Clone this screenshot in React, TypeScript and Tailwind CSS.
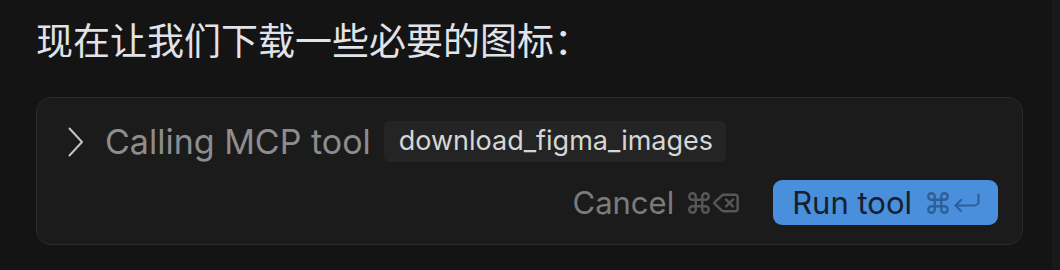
import { Command, Delete } from 'lucide-react'

const sans = "font-['Inter','Noto_Sans_CJK_SC',sans-serif]"

function ReturnKey() {
  return (
    <svg width="28" height="20" viewBox="0 0 28 20" fill="none" stroke="currentColor" strokeWidth="2.2" strokeLinecap="round" strokeLinejoin="round">
      <path d="M25.5 1.5v7a4 4 0 0 1-4 4H2.5" />
      <path d="M8 7 2.5 12.5 8 18" />
    </svg>
  )
}

export default function App() {
  return (
    <div className={`flex h-[270px] w-[1060px] bg-[#141414] ${sans}`}>
      <div className="flex-1 pl-[36px] pr-[29px] pt-[20px]">
        {/* Heading */}
        <p className="text-[37px] leading-[44px] text-[#e1e3e9]">现在让我们下载一些必要的图标：</p>

        {/* Tool call card */}
        <div className="mt-[33px] flex h-[148px] flex-col gap-[18px] rounded-[15px] border border-[#2b2b2b] bg-[#1b1b1b] pb-[19px] pl-[31px] pr-[24px] pt-[23px]">
          <div className="flex h-[41px] items-center">
            <svg width="16" height="30" viewBox="0 0 16 30" fill="none" className="shrink-0">
              <path d="M1.5 1.5 14 15 1.5 28.5" stroke="#bfc3cb" strokeWidth="2" strokeLinecap="round" strokeLinejoin="round" />
            </svg>
            <span className="ml-[21px] text-[34px] leading-none text-[#8d8d8d]">Calling MCP tool</span>
            <span className="ml-[13px] flex h-[41px] items-center rounded-[6px] bg-[#242424] pl-[15px] pr-[13px] text-[27px] text-[#d6d6d6]">
              download_figma_images
            </span>
          </div>

          <div className="flex items-center justify-end">
            <span className="text-[31px] leading-none text-[#7b7b7b]">Cancel</span>
            <span className="ml-[12px] flex items-center text-[#575757]">
              <Command size={26} strokeWidth={2.2} />
              <Delete size={28} strokeWidth={2.1} />
            </span>
            <button className="ml-[33px] flex h-[45px] items-center rounded-[9px] bg-[#4a8fdb] pl-[19px] pr-[17px]">
              <span className="text-[31px] leading-none text-[#16202c]">Run tool</span>
              <span className="ml-[13px] flex items-center gap-[2px] text-[#2f5f96]">
                <Command size={26} strokeWidth={2.2} />
                <ReturnKey />
              </span>
            </button>
          </div>
        </div>
      </div>
      <div className="w-[8px] bg-[#191919]" />
    </div>
  )
}
